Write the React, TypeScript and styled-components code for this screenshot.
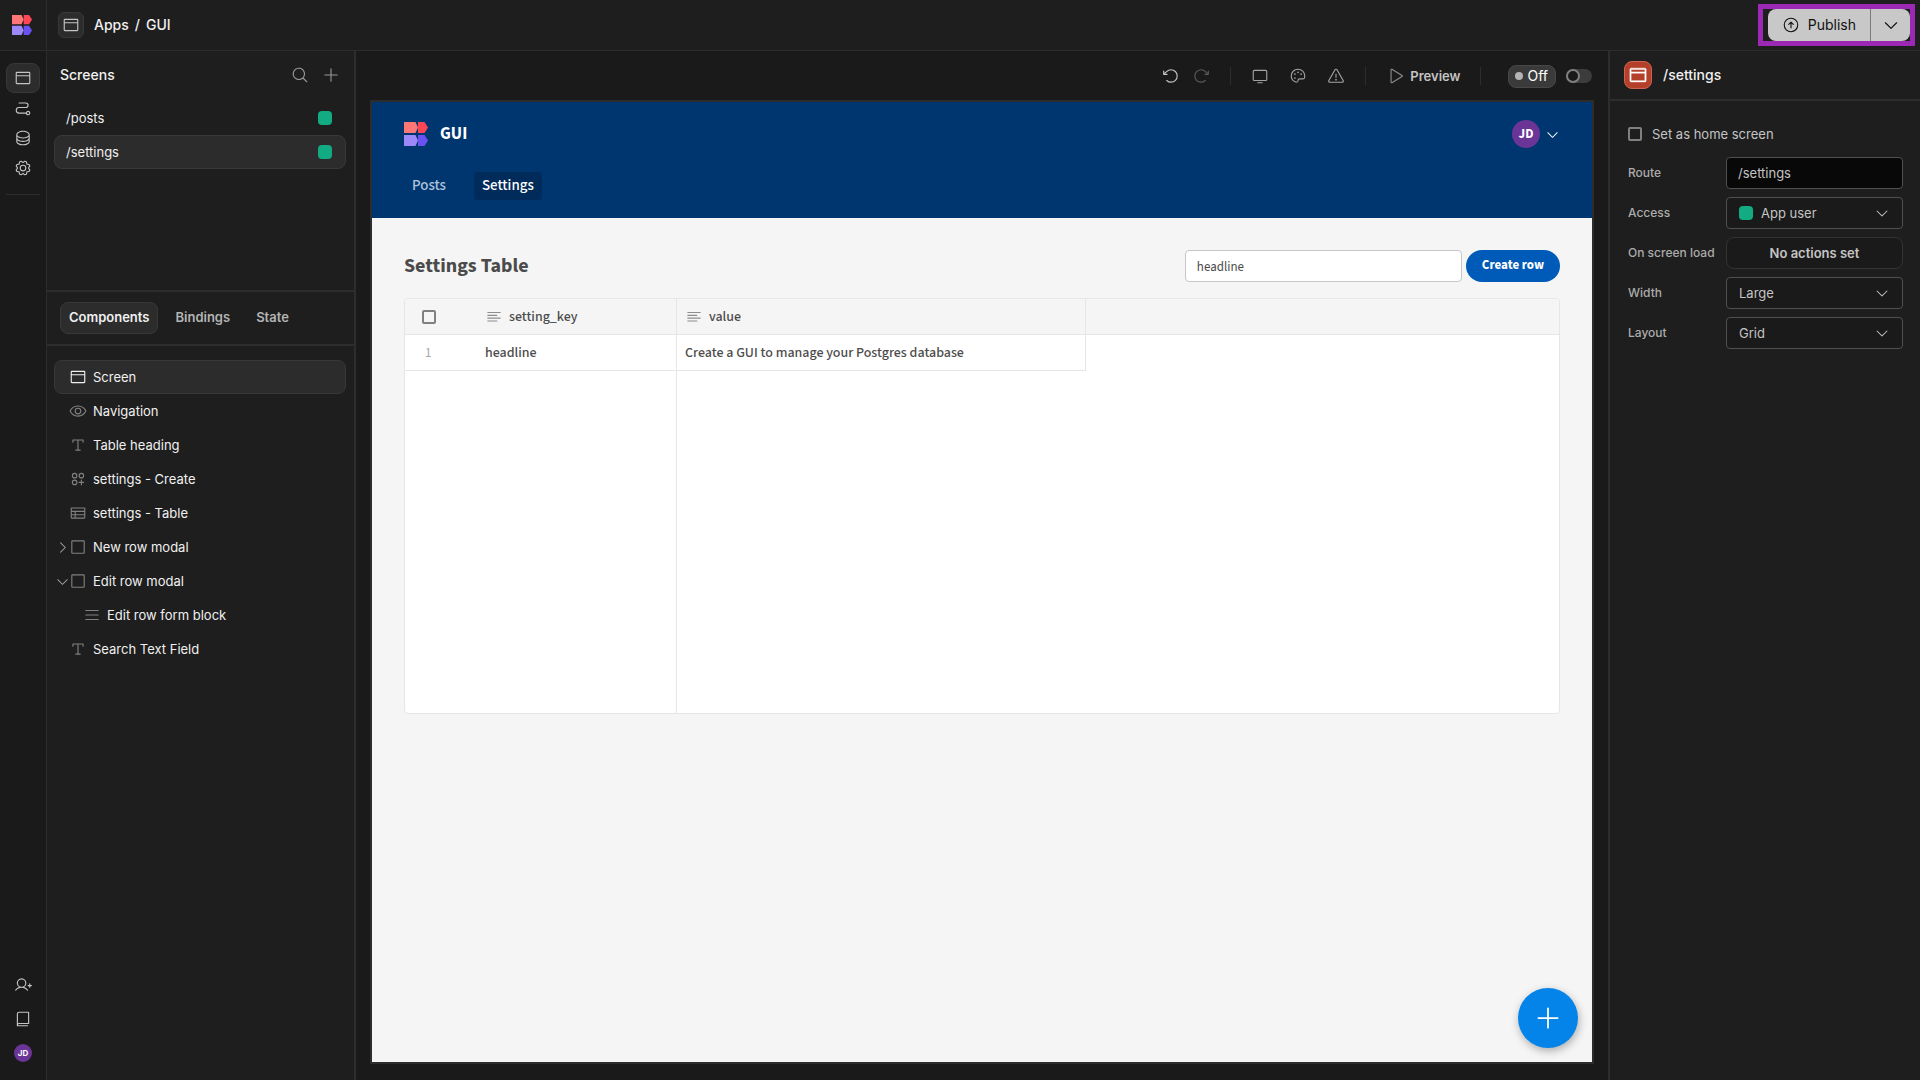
import React from "react";
import styled, { createGlobalStyle, css } from "styled-components";
import {
  PiArrowCircleUp,
  PiArrowClockwise,
  PiArrowCounterClockwise,
  PiBook,
  PiBrowser,
  PiCaretDown,
  PiCaretRight,
  PiCirclesThreePlus,
  PiDatabase,
  PiEye,
  PiGear,
  PiList,
  PiMagnifyingGlass,
  PiMonitor,
  PiPalette,
  PiPath,
  PiPlay,
  PiPlus,
  PiSquare,
  PiTable,
  PiTextAlignLeft,
  PiTextT,
  PiUserPlus,
  PiWarning,
} from "react-icons/pi";

const c = {
  bg: "#1a1a1a",
  panel: "#1e1e1e",
  line: "#2d2d2d",
  selected: "#2c2c2c",
  selectedLine: "#383838",
  text: "#f0f0f0",
  soft: "#c4c4c4",
  muted: "#808080",
  green: "#12ab82",
  purple: "#6a3597",
};

const GlobalStyle = createGlobalStyle`
  *, *::before, *::after { box-sizing: border-box; }
  body { margin: 0; background: ${c.bg}; }
  button, input, select { font: inherit; color: inherit; margin: 0; }
  button { cursor: pointer; }
  svg { display: block; flex: none; }
`;

const Page = styled.div`
  display: flex;
  flex-direction: column;
  min-height: 100vh;
  font: 500 13px/20px Inter, "Liberation Sans", sans-serif;
  color: ${c.text};
`;

const TopBar = styled.header`
  display: flex;
  align-items: center;
  height: 51px;
  padding-right: 5px;
  background: ${c.panel};
  border-bottom: 1px solid ${c.line};
`;

const LogoCell = styled.a`
  display: grid;
  place-items: center;
  align-self: stretch;
  width: 47px;
  padding-right: 3px;
  border-right: 1px solid ${c.line};
`;

const Crumbs = styled.nav`
  display: flex;
  align-items: center;
  flex: 1;
  gap: 6px;
  padding-left: 11px;
  font-size: 14px;
  line-height: 22px;
`;

const CrumbLink = styled.a`
  color: ${c.text};
  text-decoration: none;
`;

const CrumbIcon = styled.span`
  display: grid;
  place-items: center;
  width: 26px;
  height: 26px;
  margin-right: 4px;
  border: 1px solid ${c.selectedLine};
  border-radius: 6px;
  background: ${c.selected};
  color: ${c.soft};
`;

const PublishFrame = styled.div`
  display: flex;
  padding-left: 5px;
  border: 5px solid #9b29b4;
  color: #111;
  font-size: 14px;
  font-weight: 400;
`;

const PublishButton = styled.button`
  display: flex;
  align-items: center;
  gap: 8px;
  height: 32px;
  padding: 0 14px;
  border: 0;
  border-right: 1px solid #7c7c7c;
  border-radius: 8px 0 0 8px;
  background: #c8c8c8;
`;

const PublishMenu = styled.button`
  display: grid;
  place-items: center;
  width: 39px;
  height: 32px;
  padding: 0;
  border: 0;
  border-radius: 0 8px 8px 0;
  background: #c8c8c8;
`;

const Workspace = styled.div`
  display: flex;
  flex: 1;
`;

const Rail = styled.nav`
  display: flex;
  flex-direction: column;
  justify-content: space-between;
  width: 47px;
  padding: 12px 6px;
  background: ${c.bg};
  border-right: 1px solid ${c.line};
`;

const RailGroup = styled.div<{ $gap?: number }>`
  display: flex;
  flex-direction: column;
  align-items: center;
  gap: ${(p) => p.$gap ?? 0}px;
`;

const selectedBox = css`
  border-color: ${c.selectedLine};
  background: ${c.selected};
`;

const RailButton = styled.button<{ $active?: boolean }>`
  display: grid;
  place-items: center;
  width: 34px;
  height: 30px;
  padding: 0;
  border: 1px solid transparent;
  border-radius: 8px;
  background: none;
  color: ${c.soft};
  ${(p) => p.$active && selectedBox}
`;

const RailRule = styled.hr`
  width: 34px;
  margin: 11px 0 0;
  border: 0;
  border-top: 1px solid ${c.line};
`;

const Avatar = styled.span<{ $size: number; $font: number }>`
  display: grid;
  place-items: center;
  width: ${(p) => p.$size}px;
  height: ${(p) => p.$size}px;
  border-radius: 50%;
  background: ${c.purple};
  color: #fff;
  font-size: ${(p) => p.$font}px;
  font-weight: 700;
  line-height: 1;
`;

const SidePanel = styled.aside`
  width: 309px;
  background: ${c.panel};
  border-right: 2px solid ${c.line};
`;

const ScreensSection = styled.section`
  height: 241px;
  border-bottom: 2px solid ${c.line};
`;

const SectionHead = styled.div`
  display: flex;
  align-items: center;
  justify-content: space-between;
  height: 50px;
  padding: 0 14px 2px 13px;
`;

const PanelTitle = styled.h2`
  margin: 0;
  font-size: 14px;
  font-weight: 500;
`;

const IconRow = styled.div`
  display: flex;
  gap: 13px;
  color: #969696;
`;

const IconButton = styled.button<{ $color?: string }>`
  display: grid;
  place-items: center;
  padding: 0;
  border: 0;
  background: none;
  color: ${(p) => p.$color ?? "inherit"};
`;

const ItemList = styled.ul`
  margin: 0;
  padding: 0 8px 0 7px;
  list-style: none;
  font-weight: 400;
`;

const ScreenItem = styled.button<{ $active?: boolean }>`
  display: flex;
  align-items: center;
  justify-content: space-between;
  width: 100%;
  height: 34px;
  padding: 0 13px 0 11px;
  border: 1px solid transparent;
  border-radius: 8px;
  background: none;
  ${(p) => p.$active && selectedBox}
`;

const Swatch = styled.span`
  flex: none;
  width: 14px;
  height: 14px;
  border-radius: 4px;
  background: ${c.green};
`;

const Tabs = styled.div`
  display: flex;
  align-items: center;
  gap: 8px;
  height: 54px;
  padding: 0 13px;
  border-bottom: 2px solid ${c.line};
`;

const Tab = styled.button<{ $active?: boolean }>`
  height: 32px;
  padding: 0 8px 2px;
  border: 1px solid transparent;
  border-radius: 8px;
  background: none;
  color: ${(p) => (p.$active ? c.text : "#b4b4b4")};
  font-weight: 600;
  ${(p) => p.$active && selectedBox}
`;

const TreeList = styled(ItemList)`
  padding-top: 14px;
`;

const TreeCaret = styled.span`
  display: grid;
  place-items: center;
  width: 14px;
  color: #a0a0a0;
`;

const TreeIcon = styled.span`
  width: 18px;
  margin-right: 6px;
  color: ${c.muted};
`;

const TreeItem = styled.button<{ $active?: boolean; $depth?: number }>`
  display: flex;
  align-items: center;
  width: 100%;
  height: 34px;
  padding: 0 0 0 ${(p) => (p.$depth ? 14 : 0)}px;
  border: 1px solid transparent;
  border-radius: 8px;
  background: none;
  text-align: left;
  ${(p) => p.$active && selectedBox}
  ${TreeIcon} {
    ${(p) => p.$active && `color: ${c.text};`}
  }
`;

const Stage = styled.main`
  display: flex;
  flex-direction: column;
  flex: 1;
  min-width: 0;
  padding: 0 14px 16px;
  background: ${c.bg};
`;

const Toolbar = styled.div`
  display: flex;
  align-items: center;
  justify-content: flex-end;
  height: 49px;
  padding: 1px 2px 0 0;
  color: ${c.soft};
`;

const ToolGroup = styled.div<{ $gap: number }>`
  display: flex;
  align-items: center;
  gap: ${(p) => p.$gap}px;
  color: #a4a4a4;
`;

const ToolRule = styled.span`
  width: 1px;
  height: 18px;
  margin: 0 20px;
  background: ${c.line};
`;

const PreviewButton = styled.button`
  display: flex;
  align-items: center;
  gap: 6px;
  padding: 0;
  border: 0;
  background: none;
  font-weight: 600;
  svg {
    color: #8c8c8c;
  }
`;

const StateChip = styled.span`
  display: flex;
  align-items: center;
  gap: 4px;
  height: 23px;
  margin: 0 10px 0 7px;
  padding: 0 7px 0 6px;
  border: 1px solid #484848;
  border-radius: 8px;
  background: #3a3a3a;
  color: #fff;
  font-size: 14px;
  font-weight: 400;
`;

const Dot = styled.span`
  width: 8px;
  height: 8px;
  border-radius: 50%;
  background: #b4b4b4;
`;

const Toggle = styled.input`
  display: flex;
  align-items: center;
  appearance: none;
  width: 26px;
  height: 14px;
  border-radius: 7px;
  background: #3c3c3c;
  &::before {
    content: "";
    width: 14px;
    height: 14px;
    border: 2px solid #808080;
    border-radius: 50%;
    background: ${c.bg};
  }
`;

const AppFrame = styled.div`
  position: relative;
  display: flex;
  flex-direction: column;
  flex: 1;
  border: 2px solid ${c.line};
  background: #f5f5f5;
  color: #4b4b4b;
  font: 500 14px/20px "Source Sans 3", "Source Sans Pro", "Noto Sans CJK SC", "Noto Sans", sans-serif;
`;

const AppHeader = styled.header`
  display: flex;
  flex-direction: column;
  gap: 24px;
  height: 116px;
  padding: 18px 32px;
  background: #003670;
  color: #fff;
`;

const AppBrand = styled.div`
  display: flex;
  align-items: center;
  gap: 12px;
  height: 28px;
`;

const AppName = styled.h1`
  flex: 1;
  margin: 0;
  font-size: 17px;
  font-weight: 700;
`;

const UserMenu = styled.button`
  display: flex;
  align-items: center;
  gap: 5px;
  padding: 0;
  border: 0;
  background: none;
`;

const AppLinks = styled.nav`
  display: flex;
  gap: 20px;
`;

const AppLink = styled.a<{ $active?: boolean }>`
  padding: 4px 8px;
  border-radius: 4px;
  background: ${(p) => (p.$active ? "#002b5a" : "transparent")};
  color: ${(p) => (p.$active ? "#fff" : "#b0c4dc")};
  font-size: 15px;
  text-decoration: none;
`;

const AppBody = styled.section`
  padding: 32px;
`;

const BodyHead = styled.div`
  display: flex;
  align-items: center;
  gap: 4px;
  margin-bottom: 16px;
`;

const Heading = styled.h2`
  flex: 1;
  margin: 0;
  font-size: 20px;
  font-weight: 700;
  line-height: 32px;
`;

const SearchInput = styled.input`
  width: 277px;
  height: 32px;
  padding: 1px 11px 0;
  border: 1px solid #c6c6c6;
  border-radius: 4px;
  background: #fff;
  font-size: 13px;
  font-weight: 400;
`;

const CreateButton = styled.button`
  height: 32px;
  padding: 0 16px 2px;
  border: 0;
  border-radius: 16px;
  background: #005bb8;
  color: #fff;
  font-size: 13px;
  font-weight: 700;
`;

const TableFrame = styled.div`
  height: 416px;
  overflow: hidden;
  border: 1px solid #e6e6e6;
  border-radius: 4px;
  background: #fff;
`;

const Grid = styled.table`
  width: 100%;
  height: 100%;
  table-layout: fixed;
  border-collapse: separate;
  border-spacing: 0;
`;

const Col = styled.col<{ $w?: number }>`
  width: ${(p) => (p.$w ? `${p.$w}px` : "auto")};
`;

const Cell = styled.td<{ $right?: boolean; $bottom?: boolean; $index?: boolean }>`
  height: 36px;
  padding: 0 8px;
  border: 0 solid #e6e6e6;
  border-right-width: ${(p) => (p.$right ? 1 : 0)}px;
  border-bottom-width: ${(p) => (p.$bottom ? 1 : 0)}px;
  text-align: left;
  ${(p) =>
    p.$index &&
    css`
      padding: 0 0 0 20px;
      color: #a8a8a8;
      font-size: 13px;
      font-weight: 400;
    `}
`;

const HeadCell = styled(Cell)`
  background: #f5f5f5;
  color: #4b4b4b;
  font-weight: 500;
  ${(p) => p.$index && "padding: 0 0 0 17px;"}
`;

const FillRow = styled.tr`
  height: 100%;
`;

const ColumnLabel = styled.span`
  display: flex;
  align-items: center;
  gap: 6px;
  svg {
    color: #8c8c8c;
  }
`;

const CheckBox = styled.input`
  display: block;
  appearance: none;
  width: 14px;
  height: 14px;
  margin: 0;
  border: 2px solid #808080;
  border-radius: 2px;
`;

const AddButton = styled.button`
  position: absolute;
  right: 14px;
  bottom: 14px;
  display: grid;
  place-items: center;
  width: 60px;
  height: 60px;
  padding: 0;
  border: 0;
  border-radius: 50%;
  background: #0484e8;
  color: #fff;
  box-shadow: 1px 3px 8px rgba(0, 0, 0, 0.3);
`;

const Inspector = styled.aside`
  width: 312px;
  background: ${c.panel};
  border-left: 2px solid ${c.line};
`;

const InspectorHead = styled.div`
  display: flex;
  align-items: center;
  gap: 11px;
  height: 50px;
  padding-left: 14px;
  border-bottom: 2px solid ${c.line};
`;

const InspectorBadge = styled.span`
  display: grid;
  place-items: center;
  width: 28px;
  height: 28px;
  border: 1px solid #cb6350;
  border-radius: 8px;
  background: #b5402a;
  color: #fff;
`;

const Form = styled.form`
  display: flex;
  flex-direction: column;
  gap: 8px;
  padding: 21px 17px 24px 18px;
  color: ${c.soft};
`;

const CheckLabel = styled.label`
  display: flex;
  align-items: center;
  gap: 10px;
  height: 24px;
  margin-bottom: 3px;
  font-weight: 400;
`;

const Field = styled.div`
  display: grid;
  grid-template-columns: 98px 1fr;
  align-items: center;
`;

const FieldLabel = styled.label`
  color: #acacac;
  font-size: 12px;
`;

const controlBox = css`
  width: 100%;
  height: 32px;
  padding: 0 12px;
  border: 1px solid #505050;
  border-radius: 4px;
  font-weight: 400;
`;

const TextInput = styled.input`
  ${controlBox}
  padding: 0 11px;
  background: #080808;
`;

const SelectBox = styled.div`
  ${controlBox}
  display: flex;
  align-items: center;
  gap: 8px;
  background: ${c.bg};
`;

const Select = styled.select`
  flex: 1;
  min-width: 0;
  padding: 0;
  border: 0;
  appearance: none;
  background: ${c.bg};
`;

const ActionButton = styled.button`
  ${controlBox}
  border-color: #333;
  border-radius: 8px;
  background: ${c.bg};
  font-weight: 600;
`;

function Logo({ size }: { size: number }) {
  return (
    <svg width={size} height={size} viewBox="0 0 24 24" aria-hidden="true">
      <path fill="#ff4654" d="M14 0h6.500L24 5.500 20.500 11H14z" />
      <path fill="#ff7676" d="M0 0h11.500L14 5.500 11.500 11H0z" />
      <path fill="#6a52f2" d="M14 13h6.500L24 18.500 20.500 24H14z" />
      <path fill="#9c88f8" d="M0 13h11.500L14 18.500 11.500 24H0z" />
    </svg>
  );
}

const tree = [
  { label: "Screen", icon: PiBrowser, active: true },
  { label: "Navigation", icon: PiEye },
  { label: "Table heading", icon: PiTextT },
  { label: "settings - Create", icon: PiCirclesThreePlus },
  { label: "settings - Table", icon: PiTable },
  { label: "New row modal", icon: PiSquare, caret: PiCaretRight },
  { label: "Edit row modal", icon: PiSquare, caret: PiCaretDown },
  { label: "Edit row form block", icon: PiList, depth: 1 },
  { label: "Search Text Field", icon: PiTextT },
];

function SelectField({ id, label, value, swatch }: { id: string; label: string; value: string; swatch?: boolean }) {
  return (
    <Field>
      <FieldLabel htmlFor={id}>{label}</FieldLabel>
      <SelectBox>
        {swatch && <Swatch />}
        <Select id={id} defaultValue={value}>
          <option>{value}</option>
        </Select>
        <PiCaretDown size={16} />
      </SelectBox>
    </Field>
  );
}

export default function App() {
  return (
    <Page>
      <GlobalStyle />
      <TopBar>
        <LogoCell href="#home" aria-label="Home">
          <Logo size={20} />
        </LogoCell>
        <Crumbs>
          <CrumbIcon>
            <PiBrowser size={18} />
          </CrumbIcon>
          <CrumbLink href="#apps">Apps</CrumbLink>
          <span>/</span>
          <CrumbLink href="#gui">GUI</CrumbLink>
        </Crumbs>
        <PublishFrame>
          <PublishButton type="button">
            <PiArrowCircleUp size={18} />
            Publish
          </PublishButton>
          <PublishMenu type="button" aria-label="Publish options">
            <PiCaretDown size={18} />
          </PublishMenu>
        </PublishFrame>
      </TopBar>
      <Workspace>
        <Rail>
          <RailGroup>
            <RailButton $active aria-label="Design"><PiBrowser size={18} /></RailButton>
            <RailButton aria-label="Automations"><PiPath size={18} /></RailButton>
            <RailButton aria-label="Data"><PiDatabase size={18} /></RailButton>
            <RailButton aria-label="Settings"><PiGear size={18} /></RailButton>
            <RailRule />
          </RailGroup>
          <RailGroup $gap={4}>
            <RailButton aria-label="Invite"><PiUserPlus size={18} /></RailButton>
            <RailButton aria-label="Docs"><PiBook size={18} /></RailButton>
            <RailButton aria-label="Account"><Avatar $size={18} $font={8}>JD</Avatar></RailButton>
          </RailGroup>
        </Rail>
        <SidePanel>
          <ScreensSection>
            <SectionHead>
              <PanelTitle>Screens</PanelTitle>
              <IconRow>
                <IconButton aria-label="Search screens"><PiMagnifyingGlass size={18} /></IconButton>
                <IconButton aria-label="Add screen"><PiPlus size={18} /></IconButton>
              </IconRow>
            </SectionHead>
            <ItemList>
              <li><ScreenItem>/posts<Swatch /></ScreenItem></li>
              <li><ScreenItem $active>/settings<Swatch /></ScreenItem></li>
            </ItemList>
          </ScreensSection>
          <Tabs>
            <Tab $active>Components</Tab>
            <Tab>Bindings</Tab>
            <Tab>State</Tab>
          </Tabs>
          <TreeList>
            {tree.map(({ label, icon: Icon, caret: Caret, active, depth }) => (
              <li key={label}>
                <TreeItem $active={active} $depth={depth}>
                  <TreeCaret>{Caret && <Caret size={15} />}</TreeCaret>
                  <TreeIcon><Icon size={18} /></TreeIcon>
                  {label}
                </TreeItem>
              </li>
            ))}
          </TreeList>
        </SidePanel>
        <Stage>
          <Toolbar>
            <ToolGroup $gap={12}>
              <IconButton $color={c.soft} aria-label="Undo"><PiArrowCounterClockwise size={18} /></IconButton>
              <IconButton $color="#595959" aria-label="Redo"><PiArrowClockwise size={18} /></IconButton>
            </ToolGroup>
            <ToolRule />
            <ToolGroup $gap={20}>
              <IconButton aria-label="Desktop view"><PiMonitor size={18} /></IconButton>
              <IconButton aria-label="Theme"><PiPalette size={18} /></IconButton>
              <IconButton aria-label="Errors"><PiWarning size={18} /></IconButton>
            </ToolGroup>
            <ToolRule />
            <PreviewButton>
              <PiPlay size={18} />
              Preview
            </PreviewButton>
            <ToolRule />
            <StateChip><Dot />Off</StateChip>
            <Toggle type="checkbox" role="switch" aria-label="Live state" />
          </Toolbar>
          <AppFrame>
            <AppHeader>
              <AppBrand>
                <Logo size={24} />
                <AppName>GUI</AppName>
                <UserMenu aria-label="User menu">
                  <Avatar $size={28} $font={13}>JD</Avatar>
                  <PiCaretDown size={15} />
                </UserMenu>
              </AppBrand>
              <AppLinks>
                <AppLink href="#posts">Posts</AppLink>
                <AppLink href="#settings" $active>Settings</AppLink>
              </AppLinks>
            </AppHeader>
            <AppBody>
              <BodyHead>
                <Heading>Settings Table</Heading>
                <SearchInput aria-label="Search" defaultValue="headline" />
                <CreateButton>Create row</CreateButton>
              </BodyHead>
              <TableFrame>
                <Grid>
                  <colgroup>
                    <Col $w={72} />
                    <Col $w={200} />
                    <Col $w={409} />
                    <Col />
                  </colgroup>
                  <thead>
                    <tr>
                      <HeadCell as="th" $index $bottom><CheckBox type="checkbox" aria-label="Select all rows" /></HeadCell>
                      <HeadCell as="th" $right $bottom>
                        <ColumnLabel><PiTextAlignLeft size={18} />setting_key</ColumnLabel>
                      </HeadCell>
                      <HeadCell as="th" $right $bottom>
                        <ColumnLabel><PiTextAlignLeft size={18} />value</ColumnLabel>
                      </HeadCell>
                      <HeadCell $bottom />
                    </tr>
                  </thead>
                  <tbody>
                    <tr>
                      <Cell $index $bottom>1</Cell>
                      <Cell $right $bottom>headline</Cell>
                      <Cell $right $bottom>Create a GUI to manage your Postgres database</Cell>
                      <Cell />
                    </tr>
                    <FillRow>
                      <Cell />
                      <Cell $right />
                      <Cell />
                      <Cell />
                    </FillRow>
                  </tbody>
                </Grid>
              </TableFrame>
            </AppBody>
            <AddButton aria-label="Add component"><PiPlus size={28} /></AddButton>
          </AppFrame>
        </Stage>
        <Inspector>
          <InspectorHead>
            <InspectorBadge><PiBrowser size={20} strokeWidth={6} /></InspectorBadge>
            <PanelTitle>/settings</PanelTitle>
          </InspectorHead>
          <Form>
            <CheckLabel>
              <CheckBox type="checkbox" />
              Set as home screen
            </CheckLabel>
            <Field>
              <FieldLabel htmlFor="route">Route</FieldLabel>
              <TextInput id="route" defaultValue="/settings" />
            </Field>
            <SelectField id="access" label="Access" value="App user" swatch />
            <Field>
              <FieldLabel htmlFor="load">On screen load</FieldLabel>
              <ActionButton id="load" type="button">No actions set</ActionButton>
            </Field>
            <SelectField id="width" label="Width" value="Large" />
            <SelectField id="layout" label="Layout" value="Grid" />
          </Form>
        </Inspector>
      </Workspace>
    </Page>
  );
}
